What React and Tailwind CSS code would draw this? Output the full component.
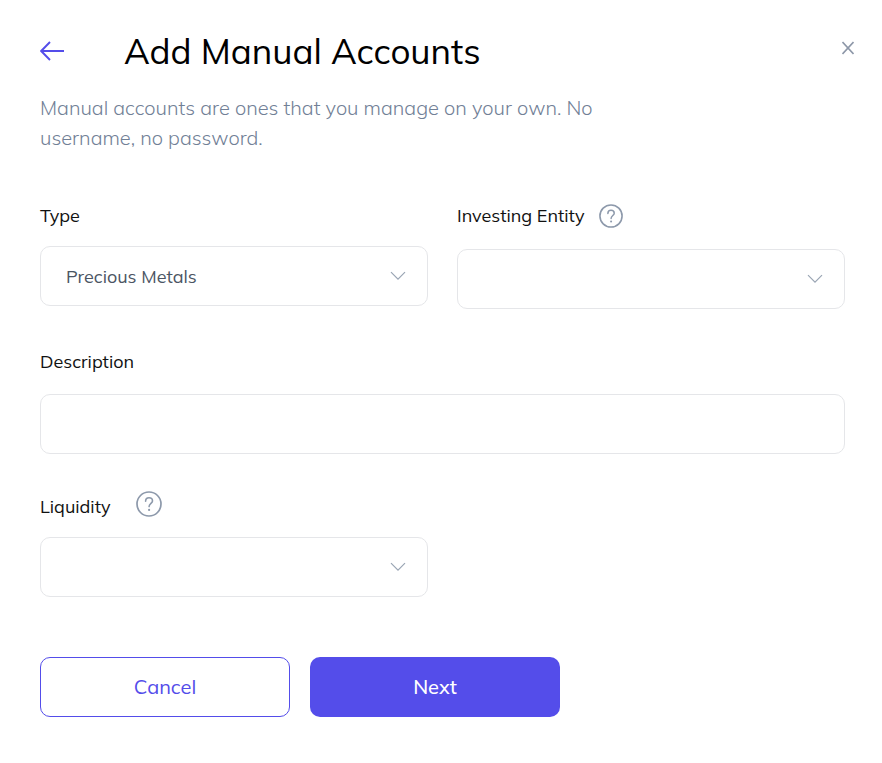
import React from "react";

function HelpIcon({ className }) {
  return (
    <svg viewBox="0 0 26 26" fill="none" stroke="currentColor" className={className} aria-hidden="true">
      <circle cx="13" cy="13" r="12" strokeWidth="1.7" />
      <path d="M9.6 10.2 C9.6 8 11 6.7 13 6.7 C15 6.7 16.5 8 16.5 9.9 C16.5 12.3 13.1 12.6 13.1 15.6" strokeWidth="1.6" strokeLinecap="round" />
      <circle cx="13.1" cy="18.9" r="1.1" fill="currentColor" stroke="none" />
    </svg>
  );
}

function SelectBox({ id, options = [] }) {
  return (
    <div className="relative">
      <select
        id={id}
        className="block h-[60px] w-full appearance-none rounded-[10px] border border-[#e5e6e9] bg-white pt-[2px] pr-14 pl-[25px] text-lg text-[#4b5563] outline-none focus:border-[#544dea]"
      >
        {options.map((option) => (
          <option key={option}>{option}</option>
        ))}
      </select>
      <svg
        viewBox="0 0 16 10"
        fill="none"
        stroke="#9aa5b4"
        className="pointer-events-none absolute top-[25px] right-[22px] h-[10px] w-4"
        aria-hidden="true"
      >
        <path d="M1 1.2 L8 8.2 L15 1.2" strokeWidth="1.2" />
      </svg>
    </div>
  );
}

export default function App() {
  return (
    <main className="min-h-screen bg-white pt-6 pb-10 font-['Mulish','Muli','Lato',sans-serif] text-[#111111]">
      <header className="flex items-center pr-7 pl-10">
        <button type="button" aria-label="Back" className="mr-[60px] text-[#544dea]">
          <svg viewBox="0 0 24 20" fill="none" stroke="currentColor" className="h-5 w-6" aria-hidden="true">
            <path d="M24 10 H1.2 M10 1 L1.2 10 L10 19" strokeWidth="1.9" />
          </svg>
        </button>
        <h1 className="grow text-[35px] leading-[54px] text-black">Add Manual Accounts</h1>
        <button type="button" aria-label="Close" className="mb-[6px] text-[#8d97a8]">
          <svg viewBox="0 0 12 14" fill="none" stroke="currentColor" className="h-[14px] w-3" aria-hidden="true">
            <path d="M0.5 1 L11.5 13 M11.5 1 L0.5 13" strokeWidth="1.6" />
          </svg>
        </button>
      </header>

      <form className="pr-[37px] pl-10" onSubmit={(event) => event.preventDefault()}>
        <p className="mt-[15px] max-w-[600px] text-xl leading-[30px] font-light text-[#718096]">
          Manual accounts are ones that you manage on your own. No username, no password.
        </p>

        <div className="mt-12 grid grid-cols-2 gap-x-[29px]">
          <div>
            <label htmlFor="type" className="mb-[15px] block text-lg leading-[30px]">
              Type
            </label>
            <SelectBox id="type" options={["Precious Metals"]} />
          </div>
          <div>
            <div className="mb-[18px] flex items-center gap-[14px]">
              <label htmlFor="entity" className="text-lg leading-[30px]">
                Investing Entity
              </label>
              <button type="button" aria-label="About investing entity" className="text-[#8d99ab]">
                <HelpIcon className="size-6" />
              </button>
            </div>
            <SelectBox id="entity" />
          </div>
        </div>

        <div className="mt-[38px]">
          <label htmlFor="description" className="mb-[17px] block text-lg leading-[30px]">
            Description
          </label>
          <input
            id="description"
            type="text"
            className="block h-[60px] w-full rounded-[10px] border border-[#e5e6e9] bg-white px-[25px] text-lg text-[#4b5563] outline-none focus:border-[#544dea]"
          />
        </div>

        <div className="mt-[37px] grid grid-cols-2 gap-x-[29px]">
          <div>
            <div className="mb-[15px] flex items-start gap-[25px]">
              <label htmlFor="liquidity" className="pt-px text-lg leading-[30px]">
                Liquidity
              </label>
              <button type="button" aria-label="About liquidity" className="text-[#8d99ab]">
                <HelpIcon className="size-[26px]" />
              </button>
            </div>
            <SelectBox id="liquidity" />
          </div>
        </div>

        <div className="mt-[60px] flex gap-5">
          <button type="button" className="h-[60px] w-[250px] rounded-[10px] border border-[#544dea] bg-white text-xl text-[#544dea]">
            Cancel
          </button>
          <button type="submit" className="h-[60px] w-[250px] rounded-[10px] bg-[#544dea] text-xl font-medium text-white">
            Next
          </button>
        </div>
      </form>
    </main>
  );
}
